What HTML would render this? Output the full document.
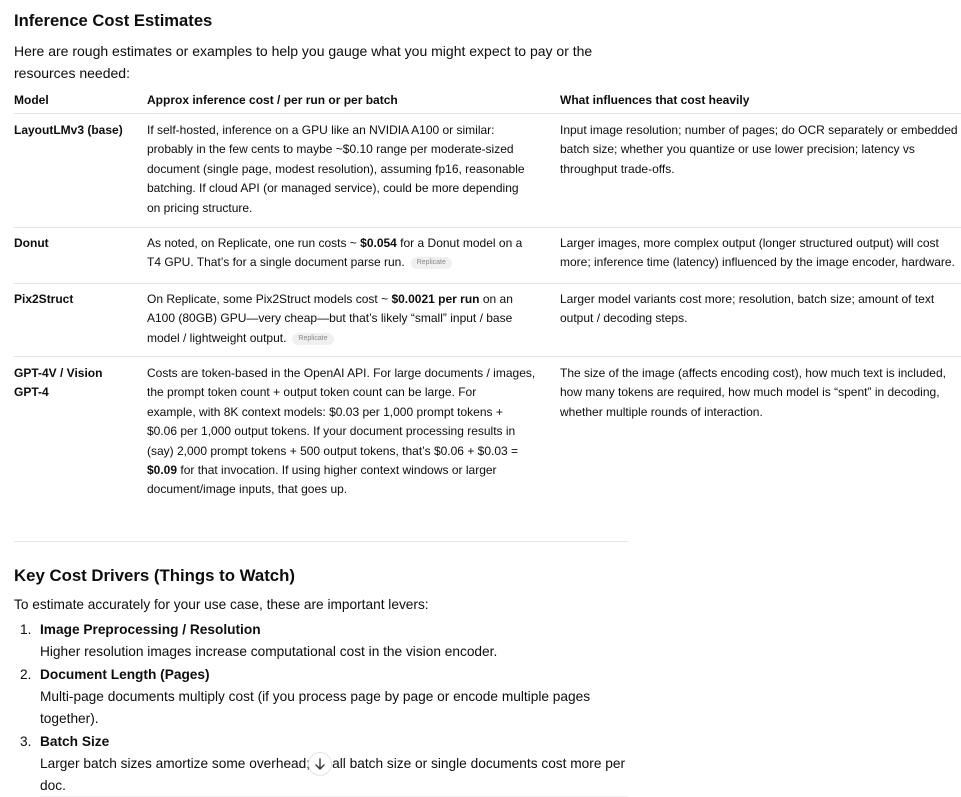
<!DOCTYPE html>
<html><head><meta charset="utf-8"><style>
html,body{margin:0;padding:0;width:961px;height:797px;overflow:hidden;background:#fff;color:#0d0d0d;font-family:"Liberation Sans",sans-serif;}
.a{position:absolute;white-space:nowrap;}
.t{font-size:12px;line-height:19.4px;}
.b{font-weight:bold;}
.hr{position:absolute;height:1px;background:#e5e5e5;}
.chip{display:inline-block;font-size:7px;line-height:12px;padding:0 6px;background:#f0f0f0;color:#888;border-radius:7px;vertical-align:middle;margin-left:6px;}
.h{font-size:16.6px;font-weight:bold;line-height:24px;}
.p{font-size:14px;line-height:22px;}
.q{font-size:13.7px;line-height:22px;}
</style></head><body>
<div class="a h" style="left:14px;top:9px">Inference Cost Estimates</div>
<div class="a p" style="left:14px;top:40px">Here are rough estimates or examples to help you gauge what you might expect to pay or the<br>resources needed:</div>

<div class="a t b" style="left:14px;top:91px">Model</div>
<div class="a t b" style="left:147px;top:91px">Approx inference cost / per run or per batch</div>
<div class="a t b" style="left:560px;top:91px">What influences that cost heavily</div>
<div class="hr" style="left:14px;width:947px;top:113px"></div>

<div class="a t b" style="left:14px;top:121px">LayoutLMv3 (base)</div>
<div class="a t" style="left:147px;top:121px">If self-hosted, inference on a GPU like an NVIDIA A100 or similar:<br>probably in the few cents to maybe ~$0.10 range per moderate-sized<br>document (single page, modest resolution), assuming fp16, reasonable<br>batching. If cloud API (or managed service), could be more depending<br>on pricing structure.</div>
<div class="a t" style="left:560px;top:121px">Input image resolution; number of pages; do OCR separately or embedded<br>batch size; whether you quantize or use lower precision; latency vs<br>throughput trade-offs.</div>
<div class="hr" style="left:14px;width:947px;top:227px"></div>

<div class="a t b" style="left:14px;top:234px">Donut</div>
<div class="a t" style="left:147px;top:234px">As noted, on Replicate, one run costs ~ <b>$0.054</b> for a Donut model on a<br>T4 GPU. That’s for a single document parse run.<span class="chip">Replicate</span></div>
<div class="a t" style="left:560px;top:234px">Larger images, more complex output (longer structured output) will cost<br>more; inference time (latency) influenced by the image encoder, hardware.</div>
<div class="hr" style="left:14px;width:947px;top:283px"></div>

<div class="a t b" style="left:14px;top:290px">Pix2Struct</div>
<div class="a t" style="left:147px;top:290px">On Replicate, some Pix2Struct models cost ~ <b>$0.0021 per run</b> on an<br>A100 (80GB) GPU—very cheap—but that’s likely “small” input / base<br>model / lightweight output.<span class="chip">Replicate</span></div>
<div class="a t" style="left:560px;top:290px">Larger model variants cost more; resolution, batch size; amount of text<br>output / decoding steps.</div>
<div class="hr" style="left:14px;width:947px;top:356px"></div>

<div class="a t b" style="left:14px;top:364px">GPT-4V / Vision<br>GPT-4</div>
<div class="a t" style="left:147px;top:364px">Costs are token-based in the OpenAI API. For large documents / images,<br>the prompt token count + output token count can be large. For<br>example, with 8K context models: $0.03 per 1,000 prompt tokens +<br>$0.06 per 1,000 output tokens. If your document processing results in<br>(say) 2,000 prompt tokens + 500 output tokens, that’s $0.06 + $0.03 =<br><b>$0.09</b> for that invocation. If using higher context windows or larger<br>document/image inputs, that goes up.</div>
<div class="a t" style="left:560px;top:364px">The size of the image (affects encoding cost), how much text is included,<br>how many tokens are required, how much model is “spent” in decoding,<br>whether multiple rounds of interaction.</div>

<div class="hr" style="left:14px;width:614px;top:541px"></div>

<div class="a h" style="left:14px;top:564px;font-size:16.8px">Key Cost Drivers (Things to Watch)</div>
<div class="a q" style="left:14px;top:594px">To estimate accurately for your use case, these are important levers:</div>
<div class="a q" style="left:20px;top:619px">1.</div>
<div class="a q b" style="left:40px;top:619px">Image Preprocessing / Resolution</div>
<div class="a q" style="left:40px;top:641px">Higher resolution images increase computational cost in the vision encoder.</div>
<div class="a q" style="left:20px;top:664px">2.</div>
<div class="a q b" style="left:40px;top:664px">Document Length (Pages)</div>
<div class="a q" style="left:40px;top:686px">Multi-page documents multiply cost (if you process page by page or encode multiple pages<br>together).</div>
<div class="a q" style="left:20px;top:731px">3.</div>
<div class="a q b" style="left:40px;top:731px">Batch Size</div>
<div class="a q" style="left:40px;top:753px">Larger batch sizes amortize some overhead; small batch size or single documents cost more per<br>doc.</div>
<div style="position:absolute;left:308px;top:752px;width:24px;height:24px;border:1px solid #e3e3e3;border-radius:50%;background:#fff;box-sizing:border-box">
<svg width="22" height="22" viewBox="0 0 22 22" style="position:absolute;left:0;top:0"><path d="M11 6v10M7 12l4 4 4-4" stroke="#333" stroke-width="1.4" fill="none" stroke-linecap="round" stroke-linejoin="round"/></svg></div>
<div class="hr" style="left:40px;width:588px;top:796px;background:#f0f0f0"></div>
</body></html>
